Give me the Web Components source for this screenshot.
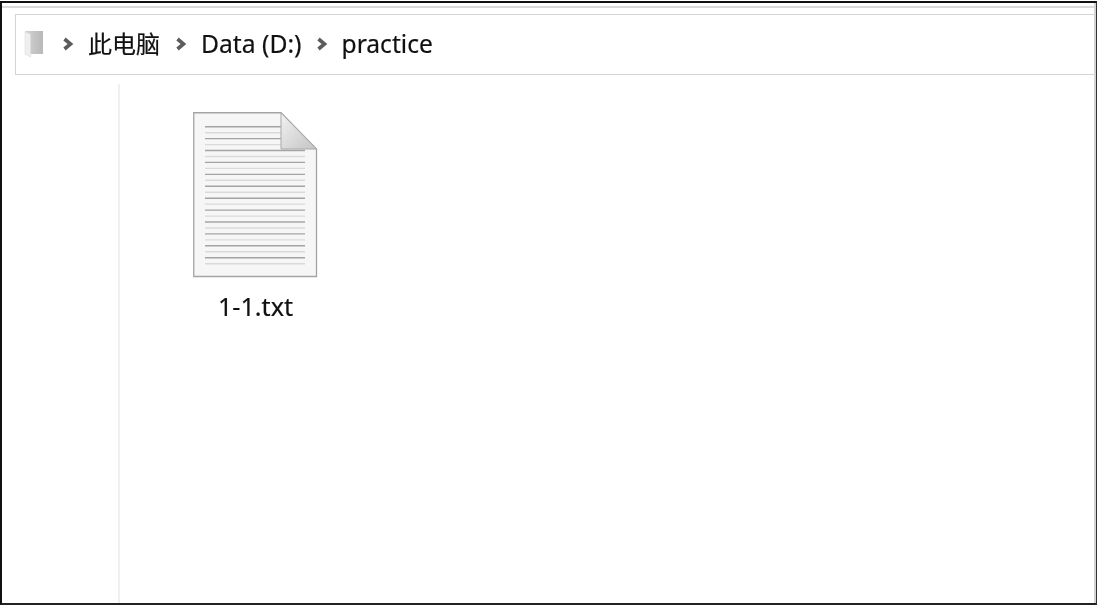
<!DOCTYPE html>
<html lang="zh"><head><meta charset="utf-8"><title>practice</title>
<style>
html,body{margin:0;padding:0;background:#fff}
body{font-family:"Noto Sans","Noto Sans CJK SC",sans-serif;color:#111;-webkit-text-stroke:.2px #111}
</style></head><body>
<template id="t-window"><style>
:host{display:flex;flex-direction:column;box-sizing:border-box;width:1097px;height:606px;background:#fff;border-top:1px solid #fff;overflow:hidden;filter:blur(.45px)}
.frame{flex:1;display:flex;flex-direction:column;min-height:0;border-top:2px solid #111;border-left:2px solid #111;border-right:1px solid #333;border-bottom:2px solid #222;margin-bottom:1px;box-sizing:border-box}
.inner{flex:1;display:flex;flex-direction:column;min-height:0;border-right:2px solid #d4d4d4}
.rule{height:2px;background:#d9d9d9;margin-top:3px;flex:none}
.addr{margin:6px 0 0 13px;flex:none;display:block}
.content{flex:1;display:flex;min-height:0;margin-top:9px}
.gutter{width:116px;flex:none;border-right:2px solid #f0f0f0}
.files{flex:1;padding:28px 0 0 73px;display:flex;align-items:flex-start}
</style><div class="frame"><div class="inner"><div class="rule"></div><div class="addr"><slot name="address"></slot></div><div class="content"><div class="gutter"></div><div class="files"><slot></slot></div></div></div></div></template>

<template id="t-address"><style>
:host{display:flex;align-items:center;box-sizing:border-box;height:61px;border:1px solid #d4d4d4;border-right:0;padding:0 0 1px 8px;font-size:24px;line-height:30px}
svg{display:block;flex:none}
.folder{margin-right:20px}
</style><svg class="folder" width="19" height="28" viewBox="0 0 19 28"><defs><linearGradient id="fg" x1="0" x2="1" y1="0" y2="0"><stop offset="0" stop-color="#d4d4d4"/><stop offset="1" stop-color="#b8b8b8"/></linearGradient></defs><rect x="1" y="1" width="18" height="23" fill="url(#fg)"/><path d="M1 2 L6.5 4 L6.5 27 L1 24Z" fill="#efefef" stroke="#dedede" stroke-width=".6"/></svg><slot></slot></template>

<template id="t-crumb"><style>
:host{display:inline-flex;align-items:center;white-space:nowrap}
svg{display:block;flex:none;margin:0 14px 0 0}
</style><svg width="11" height="14" viewBox="0 0 11 14"><path d="M1.5 2 L7.5 7 L1.5 12" fill="none" stroke="#5c5c5c" stroke-width="3.6"/></svg><span><slot></slot></span></template>

<template id="t-file"><style>
:host{display:flex;flex-direction:column;align-items:center;width:125px;font-size:25.2px;line-height:30px}
svg{display:block}
.name{margin-top:12px;white-space:nowrap}
</style><svg id="ic" width="125" height="167" viewBox="0 0 125 167"></svg><span class="name"><slot></slot></span></template>

<file-window>
  <address-bar slot="address">
    <path-crumb>此电脑</path-crumb>
    <path-crumb style="margin-left:16px;font-size:24.7px">Data (D:)</path-crumb>
    <path-crumb style="margin-left:15px;font-size:24.6px">practice</path-crumb>
  </address-bar>
  <file-item>1-1.txt</file-item>
</file-window>

<script>
function mount(name,tpl,init){
  customElements.define(name,class extends HTMLElement{
    constructor(){super();const r=this.attachShadow({mode:'open'});r.appendChild(document.getElementById(tpl).content.cloneNode(true));if(init)init(r)}
  });
}
mount('file-window','t-window');
mount('address-bar','t-address');
mount('path-crumb','t-crumb');
mount('file-item','t-file',r=>{
  let s='<defs><linearGradient id="fold" x1="0" y1="0" x2="1" y2="1"><stop offset="0" stop-color="#f2f2f2"/><stop offset="1" stop-color="#c4c4c4"/></linearGradient></defs>';
  s+='<path d="M.75 .75 H88 L123.5 37 V164.5 H.75Z" fill="#f6f6f6" stroke="#a4a4a4" stroke-width="1.3"/>';
  for(let i=0;i<24;i++){
    const y=(14.7+i*5.957).toFixed(1);
    const x2=i<4?88:112;
    s+='<line x1="12" x2="'+x2+'" y1="'+y+'" y2="'+y+'" stroke="'+(i%2?'#dadada':'#a4a4a4')+'" stroke-width="1.4"/>';
  }
  s+='<path d="M88 1 L123.5 37 H88Z" fill="url(#fold)" stroke="#a8a8a8" stroke-width="1"/>';
  r.getElementById('ic').innerHTML=s;
});
</script>
</body></html>
